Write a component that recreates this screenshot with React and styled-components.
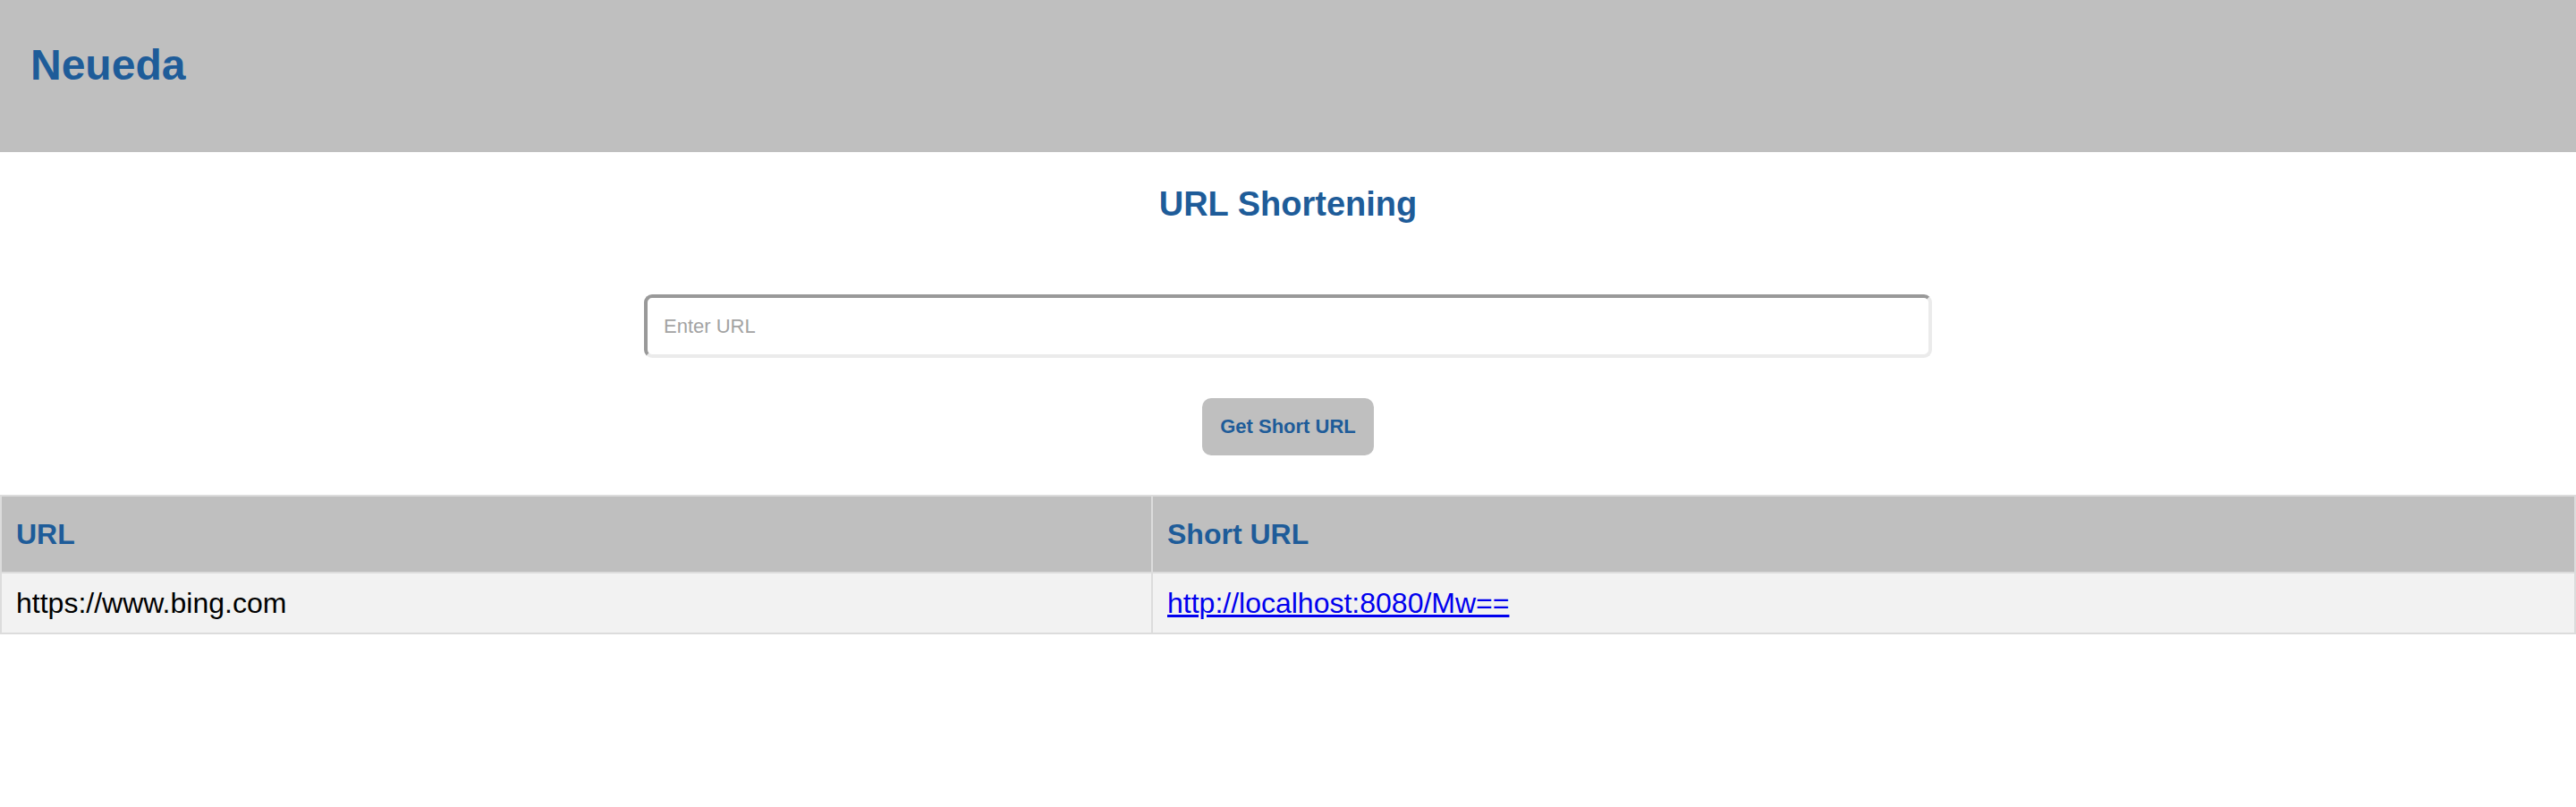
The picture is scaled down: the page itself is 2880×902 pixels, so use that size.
import React, { useState } from "react";
import styled, { createGlobalStyle } from "styled-components";

const GlobalStyle = createGlobalStyle`
  body {
    margin: 0;
    background: #ffffff;
    font-family: "Liberation Sans", Arial, sans-serif;
  }
`;

const blue = "#1e5c99";

const Header = styled.header`
  height: 170px;
  box-sizing: border-box;
  padding: 45px 34px 0;
  background: #bfbfbf;
`;

const Brand = styled.h1`
  margin: 0;
  font-size: 48px;
  font-weight: 700;
  color: ${blue};
  line-height: 55px;
`;

const Main = styled.main`
  display: flex;
  flex-direction: column;
  align-items: center;
`;

const Title = styled.h2`
  margin: 36px 0 0;
  font-size: 38px;
  line-height: 44px;
  font-weight: 700;
  color: ${blue};
`;

const UrlInput = styled.input`
  margin-top: 79px;
  width: 1440px;
  height: 71px;
  box-sizing: border-box;
  padding: 0 18px;
  border: 4px solid;
  border-color: #999999 #ebebeb #ebebeb #999999;
  border-radius: 9px;
  font-family: "Liberation Sans", Arial, sans-serif;
  font-size: 22px;
  outline: none;

  &::placeholder {
    color: #a3a3a3;
  }
`;

const Button = styled.button`
  margin-top: 45px;
  height: 64px;
  padding: 0 20px;
  border: none;
  border-radius: 10px;
  background: #bfbfbf;
  color: ${blue};
  font-family: "Liberation Sans", Arial, sans-serif;
  font-size: 22px;
  font-weight: 700;
  cursor: pointer;
`;

const Table = styled.table`
  margin-top: 44px;
  width: 100%;
  border-collapse: collapse;
  table-layout: fixed;
`;

const Cell = styled.td`
  border: 2px solid #dcdcdc;
  padding: 0 16px;
  height: 68px;
  box-sizing: border-box;
  font-size: 32px;
  color: #000000;
  background: #f2f2f2;
  text-align: left;
`;

const HeadCell = styled(Cell).attrs({ as: "th" })`
  height: 86px;
  background: #bfbfbf;
  color: ${blue};
  font-weight: 700;
`;

const ShortLink = styled.a`
  color: #0000ee;
  text-decoration: underline;
`;

export default function App() {
  const [url, setUrl] = useState("");
  const rows = [
    { url: "https://www.bing.com", short: "http://localhost:8080/Mw==" },
  ];

  return (
    <>
      <GlobalStyle />
      <Header>
        <Brand>Neueda</Brand>
      </Header>
      <Main>
        <Title>URL Shortening</Title>
        <UrlInput
          type="text"
          placeholder="Enter URL"
          value={url}
          onChange={(e) => setUrl(e.target.value)}
        />
        <Button type="button">Get Short URL</Button>
      </Main>
      <Table>
        <colgroup>
          <col style={{ width: "1287px" }} />
          <col />
        </colgroup>
        <thead>
          <tr>
            <HeadCell>URL</HeadCell>
            <HeadCell>Short URL</HeadCell>
          </tr>
        </thead>
        <tbody>
          {rows.map((r) => (
            <tr key={r.short}>
              <Cell>{r.url}</Cell>
              <Cell>
                <ShortLink href={r.short}>{r.short}</ShortLink>
              </Cell>
            </tr>
          ))}
        </tbody>
      </Table>
    </>
  );
}
